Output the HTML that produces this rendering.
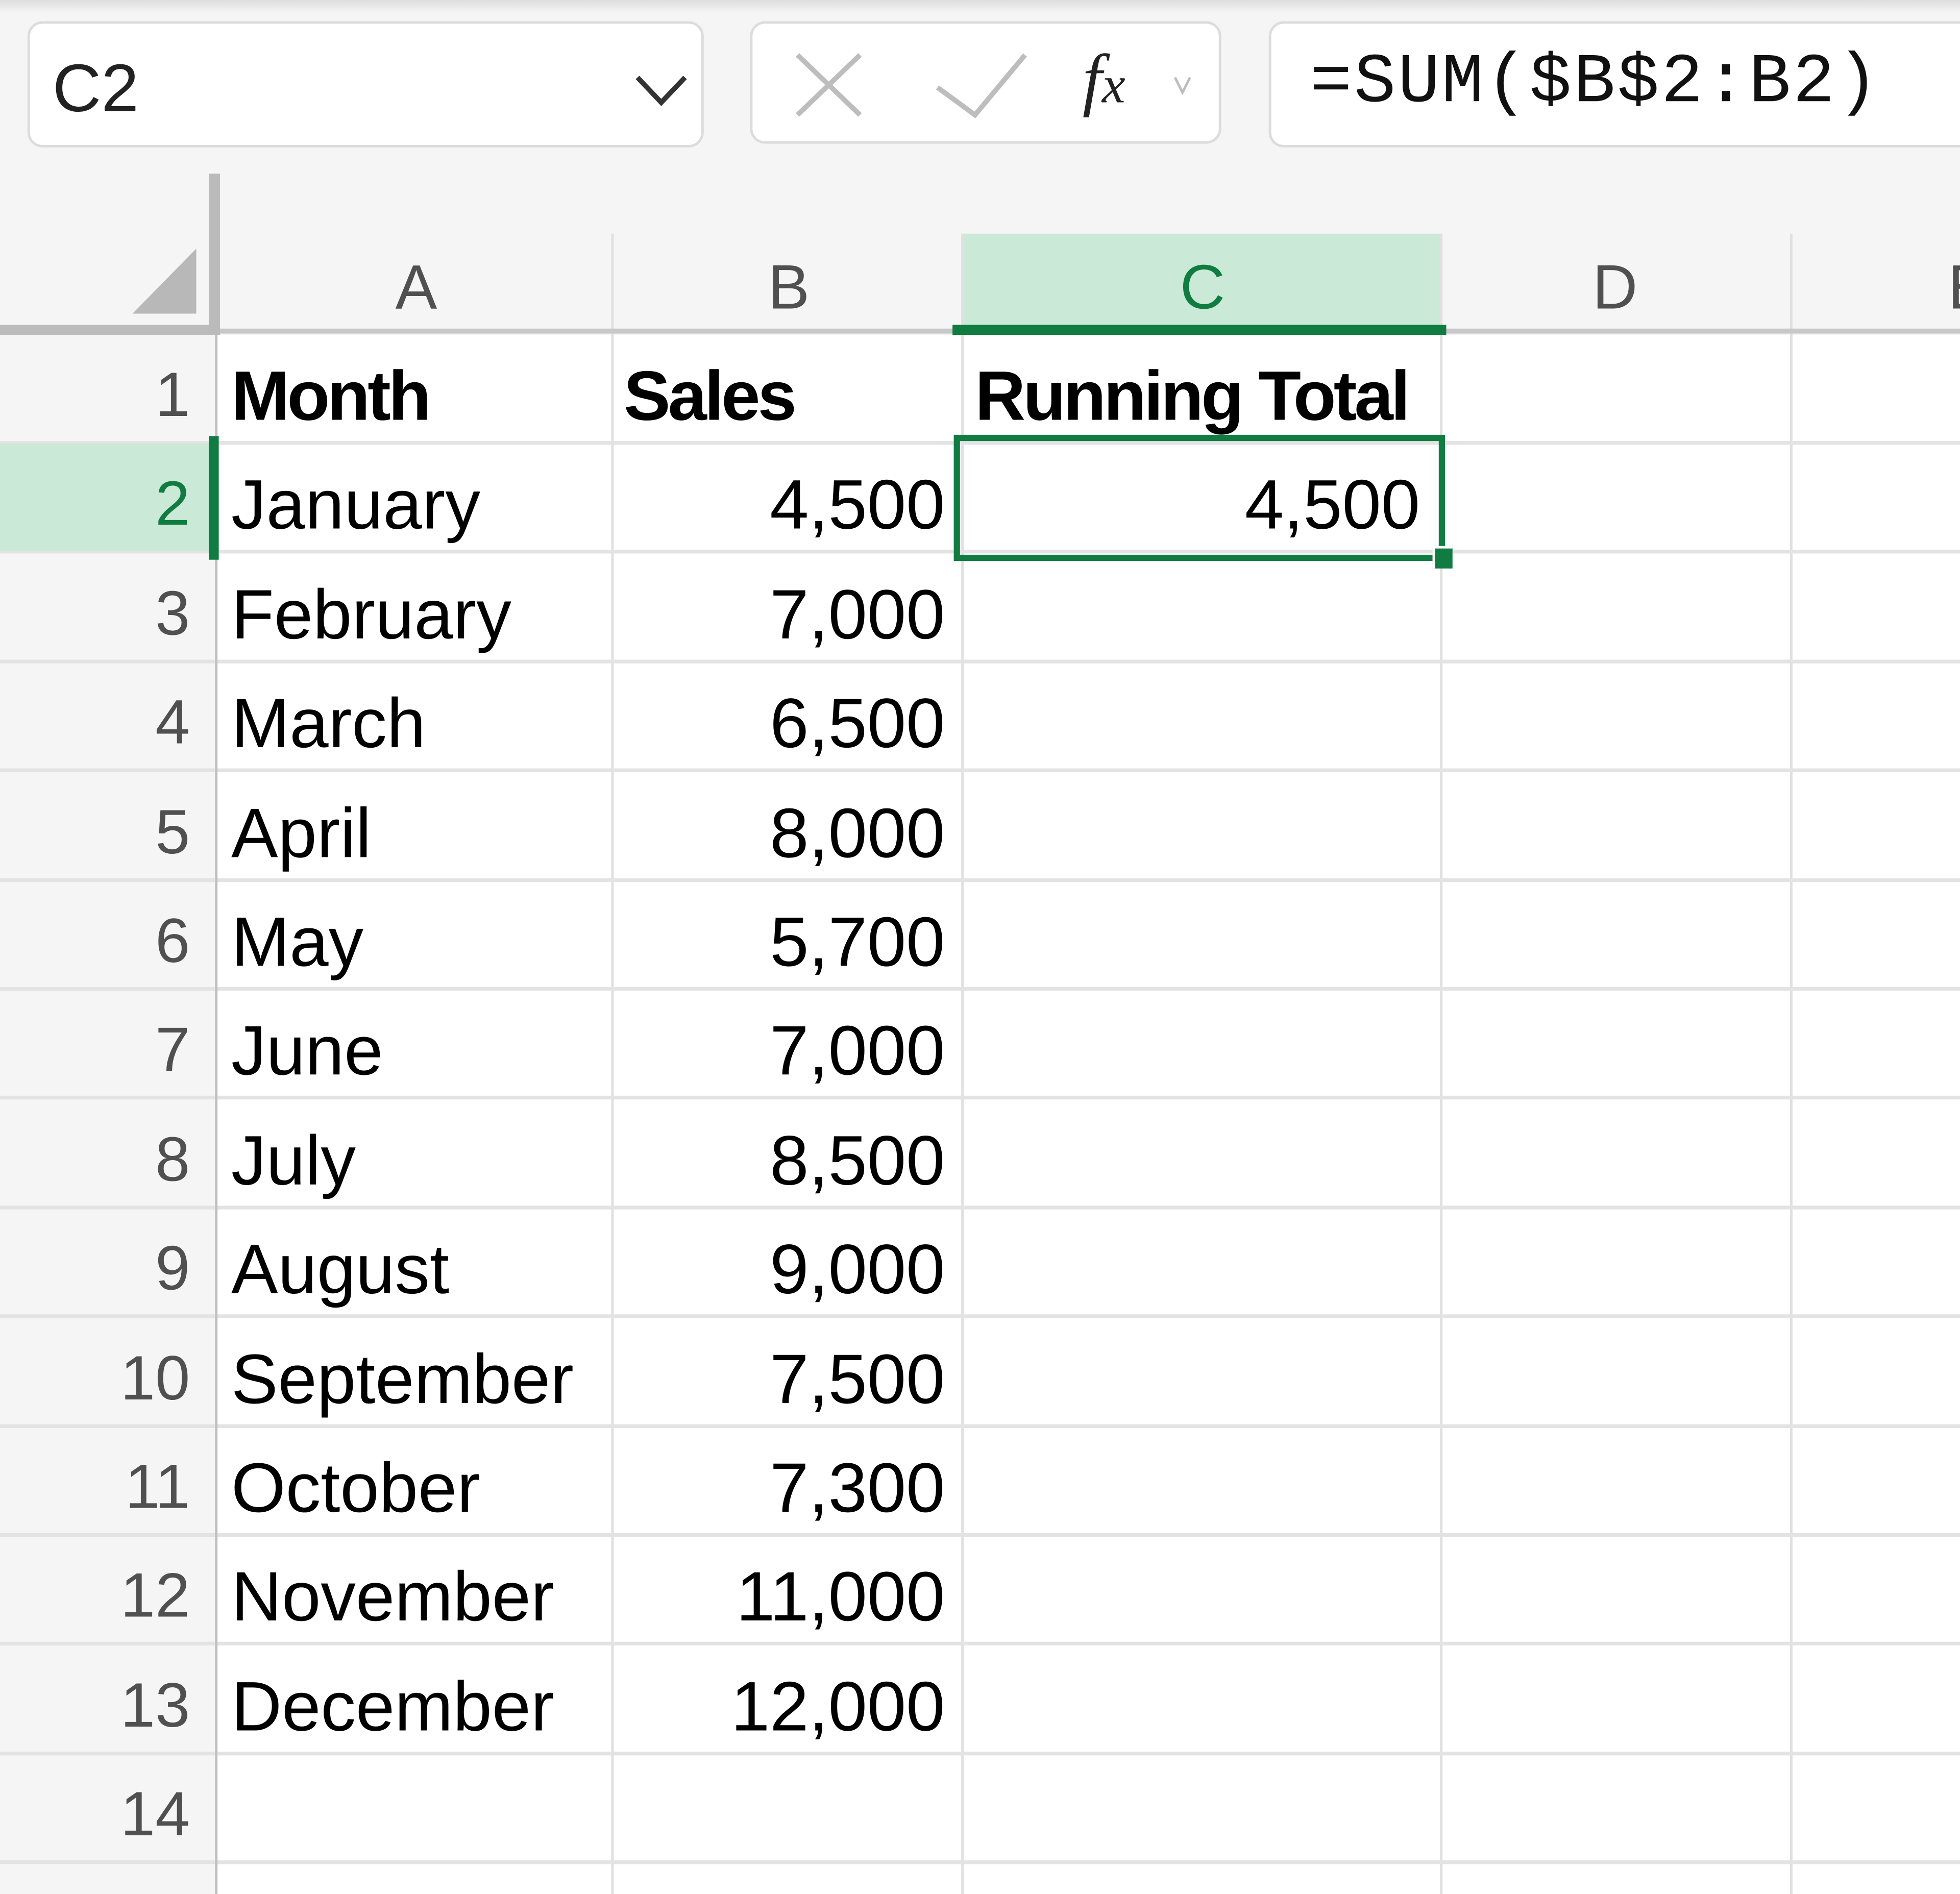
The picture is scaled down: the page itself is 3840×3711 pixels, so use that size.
<!DOCTYPE html>
<html><head><meta charset="utf-8"><style>
html,body{margin:0;padding:0;width:3840px;height:3711px;overflow:hidden;background:#f5f5f5}
#s{position:absolute;left:0;top:0;width:1568px;height:1516px;transform:scale(2.449,2.448);transform-origin:0 0;background:#f5f5f5;font-family:"Liberation Sans",sans-serif;overflow:hidden}
.abs{position:absolute}
.box{position:absolute;background:#fff;border:2px solid #dcdcdc;border-radius:12px;box-sizing:border-box}
.vl{position:absolute;width:2px;background:#e0e0e0}
.hl{position:absolute;height:3px;background:#e3e3e3;left:0;width:1568px}
.ch{position:absolute;top:201px;font-size:50px;color:#505050;width:60px;text-align:center}
.rn{position:absolute;left:0;width:152px;text-align:right;font-size:50px;color:#505050;line-height:87px}
.t{position:absolute;font-size:56px;color:#000;line-height:87px;white-space:nowrap}
.b{font-weight:bold;letter-spacing:-2px}
.n{text-align:right;width:270px;left:486px}
</style></head><body><div id="s">
<div class="abs" style="left:0;top:0;width:1568px;height:10px;background:linear-gradient(#ddd,#f5f5f5)"></div>
<div class="box" style="left:22px;top:17px;width:541px;height:101px"></div>
<div class="abs" style="left:42px;top:40px;font-size:54px;color:#222">C2</div>
<svg class="abs" style="left:506px;top:56px" width="46" height="32"><path d="M4 6 L23 26 L42 6" stroke="#333" stroke-width="4" fill="none"/></svg>
<div class="box" style="left:600px;top:17px;width:377px;height:98px"></div>
<svg class="abs" style="left:630px;top:40px" width="340" height="60">
<path d="M8 4 L58 52 M58 4 L8 52" stroke="#bdbdbd" stroke-width="4" fill="none"/>
<path d="M120 30 L150 52 L190 4" stroke="#bdbdbd" stroke-width="4" fill="none"/>
<path d="M310 22 L316 34 L322 22" stroke="#bdbdbd" stroke-width="2" fill="none"/>
</svg>
<div class="abs" style="left:866px;top:32px;font-family:'Liberation Serif',serif;font-style:italic;font-size:56px;color:#222">f<span style="font-size:42px">x</span></div>
<div class="box" style="left:1015px;top:17px;width:600px;height:101px"></div>
<div class="abs" style="left:1048px;top:34px;font-family:'Liberation Mono',monospace;font-size:56px;letter-spacing:1.5px;color:#111">=SUM($B$2:B2)</div>
<div class="abs" style="left:769px;top:187px;width:384px;height:78px;background:#cae9d6"></div>
<div class="vl" style="left:489px;top:187px;height:1330px"></div>
<div class="vl" style="left:769px;top:187px;height:1330px"></div>
<div class="vl" style="left:1152px;top:187px;height:1330px"></div>
<div class="vl" style="left:1432px;top:187px;height:1330px"></div>
<div class="ch" style="left:303px">A</div>
<div class="ch" style="left:601px">B</div>
<div class="ch" style="left:932px;color:#107c41">C</div>
<div class="ch" style="left:1262px">D</div>
<div class="ch" style="left:1545px">E</div>
<svg class="abs" style="left:100px;top:195px" width="62" height="60"><path d="M6 56 L57 4 L57 56 Z" fill="#b8b8b8"/></svg>
<div class="abs" style="left:174px;top:268px;width:1400px;height:1250px;background:#fff"></div>
<div class="vl" style="left:489px;top:268px;height:1250px"></div>
<div class="vl" style="left:769px;top:268px;height:1250px"></div>
<div class="vl" style="left:1152px;top:268px;height:1250px"></div>
<div class="vl" style="left:1432px;top:268px;height:1250px"></div>
<div class="hl" style="top:353px"></div><div class="hl" style="top:440.4px"></div><div class="hl" style="top:527.8px"></div><div class="hl" style="top:615.2px"></div><div class="hl" style="top:702.6px"></div><div class="hl" style="top:790px"></div><div class="hl" style="top:877.4px"></div><div class="hl" style="top:964.8px"></div><div class="hl" style="top:1052.2px"></div><div class="hl" style="top:1139.6px"></div><div class="hl" style="top:1227px"></div><div class="hl" style="top:1314.4px"></div><div class="hl" style="top:1401.8px"></div><div class="hl" style="top:1489.2px"></div>
<div class="abs" style="left:0;top:355.4px;width:170px;height:85.4px;background:#cae9d6"></div>
<div class="abs" style="left:0;top:263px;width:1568px;height:4px;background:#c8c8c8"></div>
<div class="abs" style="left:0;top:260px;width:172px;height:8px;background:#bbb"></div>
<div class="abs" style="left:167px;top:139px;width:9px;height:129px;background:#bbb"></div>
<div class="abs" style="left:172px;top:268px;width:2px;height:1250px;background:#c0c0c0"></div>
<div class="abs" style="left:167px;top:349px;width:8px;height:99px;background:#107c41"></div>
<div class="abs" style="left:762px;top:260px;width:395px;height:8px;background:#107c41"></div>
<div class="rn" style="top:273px">1</div>
<div class="rn" style="top:360px;color:#107c41">2</div>
<div class="rn" style="top:448px">3</div>
<div class="rn" style="top:535px">4</div>
<div class="rn" style="top:623px">5</div>
<div class="rn" style="top:710px">6</div>
<div class="rn" style="top:797px">7</div>
<div class="rn" style="top:885px">8</div>
<div class="rn" style="top:972px">9</div>
<div class="rn" style="top:1060px">10</div>
<div class="rn" style="top:1147px">11</div>
<div class="rn" style="top:1234px">12</div>
<div class="rn" style="top:1322px">13</div>
<div class="rn" style="top:1409px">14</div>
<div class="t b" style="left:185px;top:273px">Month</div>
<div class="t b" style="left:499px;top:273px">Sales</div>
<div class="t b" style="left:780px;top:273px">Running Total</div>
<div class="t" style="left:185px;top:360px">January</div><div class="t n" style="top:360px">4,500</div>
<div class="t" style="left:185px;top:448px">February</div><div class="t n" style="top:448px">7,000</div>
<div class="t" style="left:185px;top:535px">March</div><div class="t n" style="top:535px">6,500</div>
<div class="t" style="left:185px;top:623px">April</div><div class="t n" style="top:623px">8,000</div>
<div class="t" style="left:185px;top:710px">May</div><div class="t n" style="top:710px">5,700</div>
<div class="t" style="left:185px;top:797px">June</div><div class="t n" style="top:797px">7,000</div>
<div class="t" style="left:185px;top:885px">July</div><div class="t n" style="top:885px">8,500</div>
<div class="t" style="left:185px;top:972px">August</div><div class="t n" style="top:972px">9,000</div>
<div class="t" style="left:185px;top:1060px">September</div><div class="t n" style="top:1060px">7,500</div>
<div class="t" style="left:185px;top:1147px">October</div><div class="t n" style="top:1147px">7,300</div>
<div class="t" style="left:185px;top:1234px">November</div><div class="t n" style="top:1234px">11,000</div>
<div class="t" style="left:185px;top:1322px">December</div><div class="t n" style="top:1322px">12,000</div>
<div class="abs" style="left:763px;top:348px;width:393px;height:101px;border:5px solid #107c41;box-sizing:border-box"></div>
<div class="abs" style="left:1146px;top:437px;width:14px;height:16px;background:#107c41;border-left:2px solid #fff;border-top:2px solid #fff"></div>
<div class="t n" style="top:360px;left:866px">4,500</div>
</div></body></html>
